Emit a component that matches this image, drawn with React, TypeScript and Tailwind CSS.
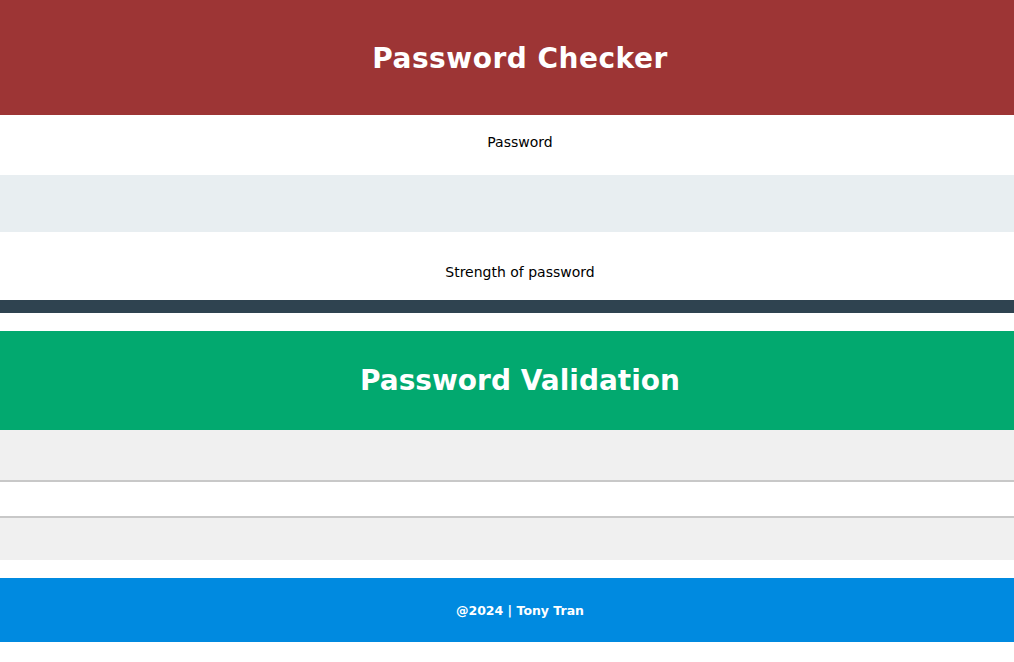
export default function App() {
  return (
    <div className="min-h-[662px] bg-white font-['DejaVu_Sans',sans-serif]">
      {/* Checker header */}
      <header className="flex h-[115px] items-center justify-center bg-[#9d3535] pl-[26px] pt-[2px]">
        <h1 className="text-[28px] font-bold tracking-[0.5px] text-white">Password Checker</h1>
      </header>

      {/* Password input */}
      <div className="flex h-[60px] items-center justify-center pb-[5px] pl-[26px]">
        <label className="text-[14px] text-black">Password</label>
      </div>
      <div className="h-[57px] bg-[#e8eef1]" />

      {/* Strength */}
      <div className="flex h-[68px] items-end justify-center pb-[17px] pl-[26px]">
        <p className="text-[14px] text-black">Strength of password</p>
      </div>
      <div className="h-[13px] bg-[#2f4350]" />

      {/* Validation */}
      <section className="mt-[18px]">
        <div className="flex h-[99px] items-center justify-center bg-[#02a96f] pl-[26px]">
          <h2 className="text-[28px] font-bold text-white">Password Validation</h2>
        </div>
        <ul>
          <li className="h-[52px] border-b-2 border-[#c8c8c8] bg-[#f0f0f0]" />
          <li className="h-[36px] border-b-2 border-[#c8c8c8] bg-white" />
          <li className="h-[42px] bg-[#f0f0f0]" />
        </ul>
      </section>

      {/* Footer */}
      <footer className="mt-[18px] flex h-[64px] items-center justify-center bg-[#008ae0] pl-[26px] pt-[2px]">
        <p className="text-[12.5px] font-bold text-white">@2024 | Tony Tran</p>
      </footer>
    </div>
  )
}
